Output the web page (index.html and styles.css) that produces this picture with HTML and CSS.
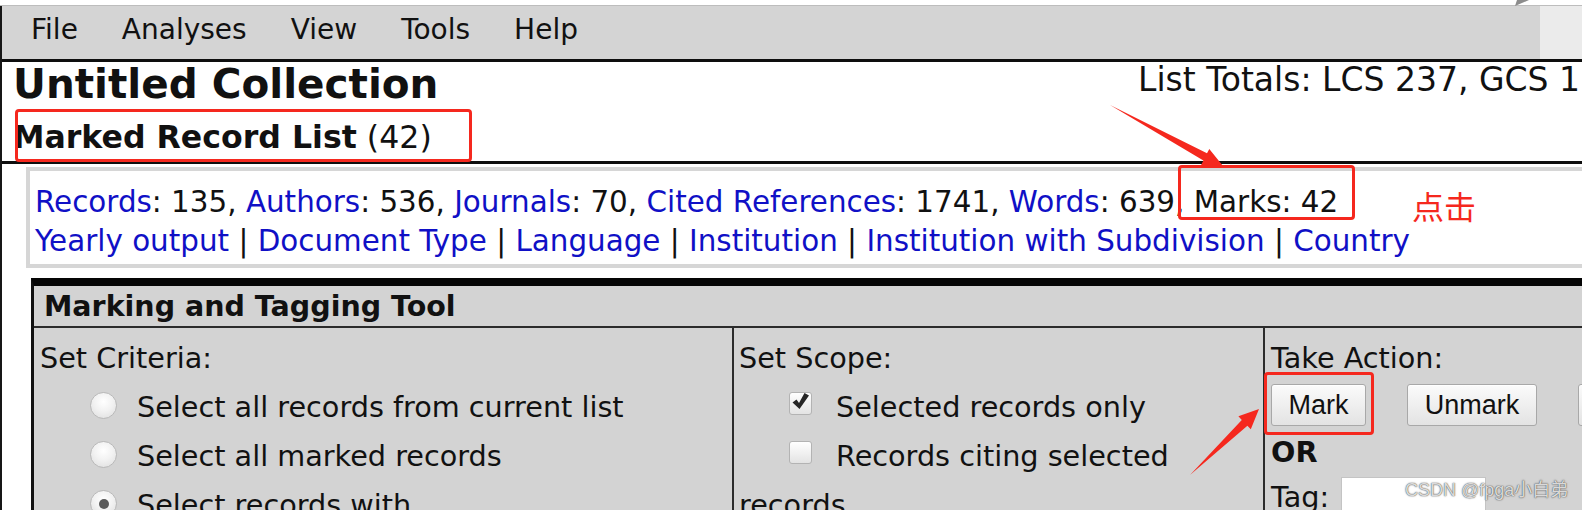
FILE: index.html
```html
<!DOCTYPE html>
<html lang="en">
<head>
<meta charset="utf-8">
<title>Marked Record List</title>
<link rel="stylesheet" href="styles.css">
</head>
<body>
<div class="topstrip">
  <svg class="corner" width="14" height="6" viewBox="0 0 14 6"><polygon points="0,6 2,0 14,0" fill="#8c8c8c"/></svg>
</div>
<div class="frame">
  <nav class="menubar">
    <span class="menu-item">File</span>
    <span class="menu-item">Analyses</span>
    <span class="menu-item">View</span>
    <span class="menu-item">Tools</span>
    <span class="menu-item">Help</span>
    <span class="menu-fill"></span>
    <span class="menu-end"></span>
  </nav>

  <header class="collection">
    <div class="title-row">
      <h1 class="title">Untitled Collection</h1>
      <div class="totals">List Totals: LCS 237, GCS 1</div>
    </div>
    <h2 class="list-name"><b>Marked Record List</b> (42)</h2>
  </header>

  <section class="stats">
    <div class="stats-line"><a href="#">Records</a>: 135, <a href="#">Authors</a>: 536, <a href="#">Journals</a>: 70, <a href="#">Cited References</a>: 1741, <a href="#">Words</a>: 639, Marks: 42</div>
    <div class="stats-line"><a href="#">Yearly output</a> | <a href="#">Document Type</a> | <a href="#">Language</a> | <a href="#">Institution</a> | <a href="#">Institution with Subdivision</a> | <a href="#">Country</a></div>
  </section>

  <div class="tool">
    <div class="tool-head">Marking and Tagging Tool</div>
    <div class="tool-body">
      <div class="cell criteria">
        <div class="line">Set Criteria:</div>
        <div class="line"><span class="radio"></span>Select all records from current list</div>
        <div class="line"><span class="radio"></span>Select all marked records</div>
        <div class="line"><span class="radio on"></span>Select records with</div>
      </div>
      <div class="cell scope">
        <div class="line">Set Scope:</div>
        <div class="line"><span class="check on"><svg width="21" height="21" viewBox="0 0 21 21"><path d="M2.5 11.5 L6.5 8.5 L9 12 L14.5 2 L19 4.5 L9.5 18 Z" fill="#262626"/></svg></span>Selected records only</div>
        <div class="line"><span class="check"></span>Records citing selected records</div>
      </div>
      <div class="cell action">
        <div class="line">Take Action:</div>
        <div class="btn-row">
          <button class="btn btn-mark">Mark</button>
          <button class="btn btn-unmark">Unmark</button>
          <button class="btn btn-more"></button>
        </div>
        <div class="or">OR</div>
        <div class="tag-row">
          <span class="tag-label">Tag:</span>
          <span class="tag-input"></span>
        </div>
      </div>
    </div>
  </div>
</div>

<div class="annot">
  <div class="rbox rbox-list"></div>
  <div class="rbox rbox-marks"></div>
  <div class="rbox rbox-mark"></div>
  <div class="click-note">点击</div>
  <svg class="arrows" width="1582" height="510" viewBox="0 0 1582 510">
    <polygon points="1110,105 1207,153.3 1209.3,148.9 1223,166 1201.1,164.9 1203.4,160.5" fill="#f5281e"/>
    <polygon points="1190,475 1241.8,419.9 1238.4,416.3 1259,409 1250.8,429.3 1247.4,425.7" fill="#f5281e"/>
  </svg>
  <div class="watermark">CSDN @fpga小白弟</div>
</div>
</body>
</html>
```

FILE: styles.css
```css
* { box-sizing: border-box; }

body {
  margin: 0;
  width: 1582px;
  height: 510px;
  overflow: hidden;
  position: relative;
  background: #fff;
  color: #111;
  font-family: "DejaVu Sans", Verdana, sans-serif;
}

.topstrip {
  height: 6px;
  border-bottom: 1px solid #bdbdbd;
  display: flex;
}
.corner { margin-left: 1515px; display: block; }

.frame {
  border-left: 2px solid #161616;
  height: 504px;
  overflow: hidden;
}

/* menu bar */
.menubar {
  display: flex;
  align-items: center;
  height: 56px;
  padding: 0 0 6px 7px;
  background: #d4d4d4;
  border-bottom: 3px solid #0e0e0e;
  font-size: 28px;
}
.menu-item { padding: 0 22px; }
.menu-fill { flex: 1; }
.menu-end {
  width: 42px;
  align-self: stretch;
  margin-bottom: -6px;
  background: #ebebeb;
}

/* collection header */
.collection {
  height: 102px;
  padding-left: 11px;
  border-bottom: 3px solid #0e0e0e;
}
.title-row {
  display: flex;
  align-items: flex-start;
}
.title {
  flex: 0 0 1125px;
  margin: 0;
  font-size: 40.5px;
  line-height: 44px;
  font-weight: bold;
}
.totals {
  flex: none;
  white-space: nowrap;
  font-size: 33px;
  line-height: 36px;
}
.list-name {
  margin: 11px 0 0;
  font-size: 31.6px;
  line-height: 40px;
  font-weight: normal;
}

/* stats box */
.stats {
  margin: 3px 0 0 24px;
  border: 4px solid #d6d6d6;
  border-right: 0;
  padding: 12px 0 3px 5px;
  font-size: 29.4px;
  line-height: 39px;
  white-space: nowrap;
}
.stats a {
  color: #1010c6;
  text-decoration: none;
}

/* marking and tagging tool */
.tool {
  margin: 10px 0 0 29px;
  border-top: 8px solid #050505;
  border-left: 3px solid #111;
  background: #d3d3d3;
  height: 240px;
}
.tool-head {
  height: 42px;
  padding: 2px 0 0 10px;
  border-bottom: 2px solid #2b2b2b;
  font-size: 28.5px;
  line-height: 38px;
  font-weight: bold;
}
.tool-body {
  display: grid;
  grid-template-columns: 700px 531px 1fr;
  height: 200px;
}
.cell {
  padding: 6px 0 0 6px;
  font-size: 28.7px;
  line-height: 49px;
}
.criteria, .scope { border-right: 2px solid #2b2b2b; }
.scope { padding-left: 5px; }

.radio {
  display: inline-block;
  width: 27px;
  height: 27px;
  margin: 0 20px 0 50px;
  vertical-align: -2px;
  border-radius: 50%;
  border: 1px solid #b9b9b9;
  background: radial-gradient(circle at 50% 35%, #ffffff 0%, #f2f2f2 45%, #dcdcdc 100%);
  position: relative;
}
.radio.on::after {
  content: "";
  position: absolute;
  left: 7.5px;
  top: 7.5px;
  width: 10px;
  height: 10px;
  border-radius: 50%;
  background: #5a5a5a;
}

.check {
  display: inline-block;
  width: 23px;
  height: 23px;
  margin: 0 24px 0 50px;
  vertical-align: 2px;
  border-radius: 3px;
  border: 1px solid #b3b3b3;
  background: linear-gradient(#ffffff, #e3e3e3);
  position: relative;
}
.check svg {
  position: absolute;
  left: 0;
  top: -2px;
}

.btn-row {
  display: flex;
  gap: 41px;
  margin-top: 1px;
  white-space: nowrap;
}
.btn {
  flex: none;
  height: 42px;
  padding: 0;
  border: 1px solid #a8a8a8;
  border-radius: 3px;
  background: linear-gradient(#fbfbfb, #e3e3e3);
  box-shadow: inset 0 1px 0 #fff;
  color: #111;
  font-family: "Liberation Sans", Arial, sans-serif;
  font-size: 27px;
}
.btn-mark { width: 95px; }
.btn-unmark { width: 130px; }
.btn-more { width: 90px; }

.or {
  margin-top: 6px;
  font-weight: bold;
  line-height: 40px;
}
.tag-row {
  display: flex;
  align-items: flex-start;
  margin-top: 5px;
  line-height: 40px;
}
.tag-label { flex: none; }
.tag-input {
  flex: none;
  width: 145px;
  height: 36px;
  margin-left: 12px;
  background: #fff;
  border: 1px solid #c4c4c4;
}

/* annotations laid over the page */
.annot {
  position: absolute;
  left: 0;
  top: 0;
  width: 1582px;
  height: 510px;
  pointer-events: none;
}
.rbox {
  position: absolute;
  border: 3px solid #f5281e;
  border-radius: 4px;
}
.rbox-list { left: 15px; top: 109px; width: 457px; height: 53px; }
.rbox-marks { left: 1178px; top: 165px; width: 177px; height: 55px; }
.rbox-mark { left: 1264px; top: 372px; width: 110px; height: 63px; }

.arrows {
  position: absolute;
  left: 0;
  top: 0;
}
.click-note {
  position: absolute;
  left: 1412px;
  top: 186px;
  color: #f5281e;
  font-family: "Noto Sans CJK SC", sans-serif;
  font-size: 32px;
  line-height: 38px;
}
.watermark {
  position: absolute;
  left: 1405px;
  top: 478px;
  color: rgba(240, 240, 240, 0.9);
  text-shadow: 0 0 1px rgba(30, 30, 30, 0.9), 0 0 2px rgba(60, 60, 60, 0.5);
  font-family: "Liberation Sans", "Noto Sans CJK SC", sans-serif;
  font-size: 18px;
  line-height: 24px;
  white-space: nowrap;
}
```
